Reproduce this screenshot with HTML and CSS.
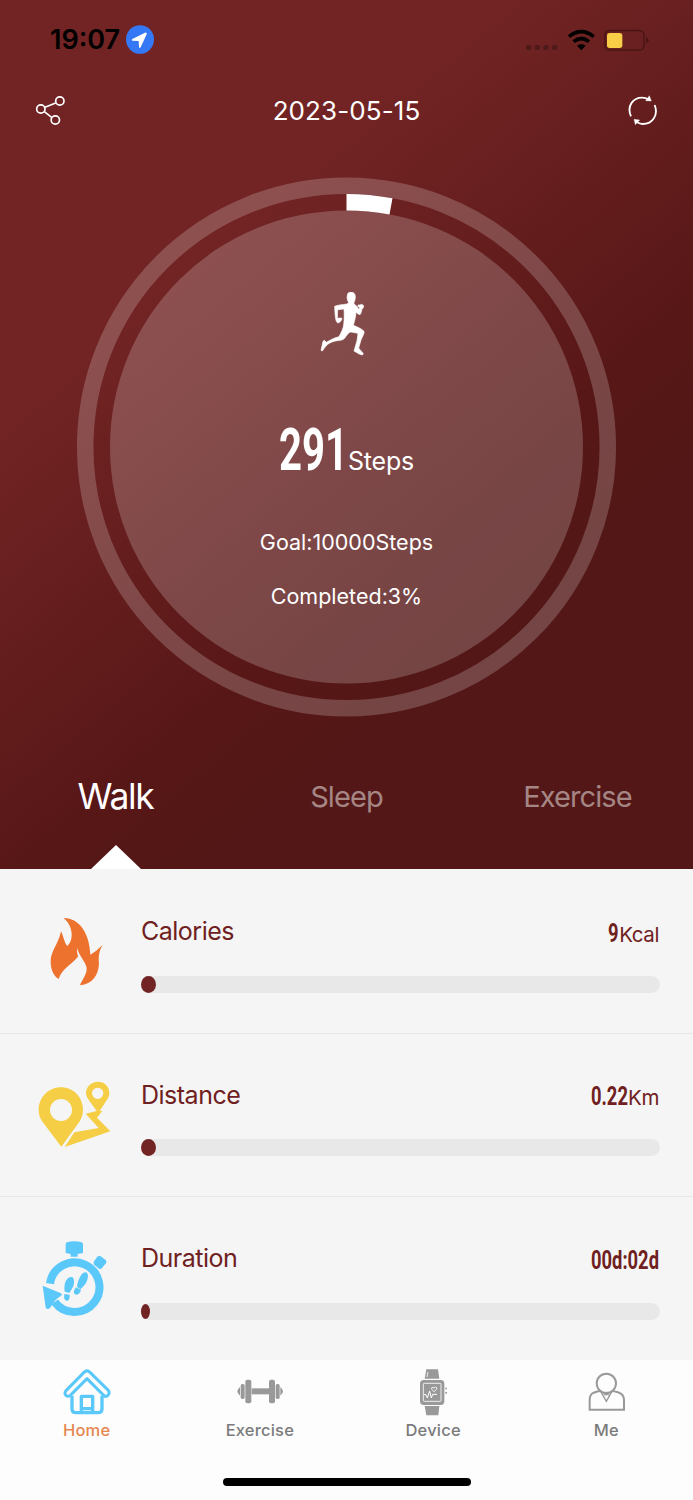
FILE: index.html
```html
<!DOCTYPE html>
<html lang="en">
<head>
  <meta charset="UTF-8" />
  <meta name="viewport" content="width=device-width, initial-scale=1.0"/>
  <title>Steps</title>
  <link rel="stylesheet" href="styles.css">
</head>
<body>

  <section class="hero">
    <div class="status-bar">
      <span class="time">19:07</span>
      <svg class="location" viewBox="377 75 84 87">
        <ellipse cx="419" cy="118.500" rx="42" ry="43" fill="#3478f6"/>
        <path d="M438 98 Q440 99 439 103 L421 142 Q418 146 416 141 L415 123 L396 122 Q392 120 396 117 L434 98 Q437 97 438 98Z" fill="#fff"/>
      </svg>
      <div class="status-icons">
        <svg class="signal" viewBox="534 84 102 66" fill="#501a1a">
          <rect x="537" y="132" width="16" height="15" rx="5"/>
          <rect x="563" y="132" width="16" height="15" rx="5"/>
          <rect x="589" y="132" width="16" height="15" rx="5"/>
          <rect x="615" y="132" width="16" height="15" rx="5"/>
        </svg>
        <svg class="wifi" viewBox="660 84 87 66" fill="none" stroke="#000">
          <path d="M666 107 Q703 77 740 107" stroke-width="11"/>
          <path d="M680 122 Q703 103 726 122" stroke-width="11"/>
          <path d="M690 134 Q703 124 716 134 L703 148Z" fill="#000" stroke="none"/>
        </svg>
        <svg class="battery" viewBox="774 84 138 66">
          <rect x="777" y="88.500" width="117" height="59" rx="14" fill="none" stroke="#471313" stroke-width="4"/>
          <rect x="783" y="96" width="46" height="45" rx="8" fill="#f7ce46"/>
          <path d="M900 109 Q908 111 908 118 Q908 125 900 127Z" fill="#471313"/>
        </svg>
      </div>
    </div>

    <header class="header">
      <svg class="header-icon" viewBox="105 285 93 93" fill="none" stroke="#fff" stroke-width="5">
        <circle cx="122.500" cy="327" r="12.500"/>
        <circle cx="179.500" cy="303" r="12.500"/>
        <circle cx="166" cy="360" r="12.500"/>
        <path d="M135 322 L167 309 M133 335 L155 352"/>
      </svg>
      <h1>2023-05-15</h1>
      <svg class="header-icon" viewBox="843 285 93 93" fill="none" stroke="#fff" stroke-width="5.500">
        <path d="M855 349 C841 317 862 292 890 293 Q898 293 907 298"/>
        <path d="M926 315 C938 345 920 372 890 372 Q882 372 872 366"/>
        <path d="M910 287 L916 303 L899 302Z M864 358 L881 360 L868 374Z" fill="#fff" stroke-width="1"/>
      </svg>
    </header>

    <div class="ring">
      <svg class="ring-bg" viewBox="0.5 0 540 540">
        <circle cx="270" cy="270" r="261.300" fill="none" stroke="#fff" stroke-opacity=".2" stroke-width="16.500"/>
        <circle cx="270" cy="270" r="236.500" fill="#fff" fill-opacity=".2"/>
        <path d="M270 25.300 A244.700 244.700 0 0 1 314.500 29.400" fill="none" stroke="#fff" stroke-width="16.500"/>
      </svg>
      <svg class="runner" viewBox="60 366 159 192" fill="#fff">
        <path d="M153 366 C160 366 166 371 166 380 C166 389 163 396 161 399 L165 405 C171 407 173 412 176 418 L180 414 L174 409 L174 405 L180 405 L185 403 L190 406 L191 411 L186 418 C184 426 183 431 180 434 C175 433 171 430 168 426 C168 438 164 451 160 466 C172 471 185 476 192 484 C194 490 187 500 183 510 L176 534 C180 540 187 546 190 551 L187 555 C179 554 171 548 162 543 L164 536 L171 512 L174 490 L153 486 C148 486 143 492 138 499 C132 510 124 511 112 512 C101 513 90 518 83 523 L73 534 L67 543 L63 541 L66 528 L69 514 L73 511 L79 517 C91 510 101 504 117 500 C124 487 130 475 131 465 C133 448 133 431 132 417 L113 419 L112 445 L119 444 L126 445 L124 451 L119 457 L113 459 L109 454 C105 442 105 429 104 409 C112 405 127 404 141 402 L146 398 C142 391 140 384 142 376 C143 369 147 366 153 366Z" stroke="#fff" stroke-width="2"/>
      </svg>
      <p class="steps"><span class="num">291</span><span class="unit">Steps</span></p>
      <p class="goal">Goal:10000Steps</p>
      <p class="completed">Completed:3%</p>
    </div>

    <nav class="tabs">
      <a class="active">Walk</a>
      <a>Sleep</a>
      <a>Exercise</a>
    </nav>
  </section>

  <main>
    <div class="row">
      <svg class="row-icon" viewBox="18 39 288 288" fill="#ec722e">
        <path d="M131 84 C180 84 209 133 211 194 Q229 184 248 165 C237 183 235 198 237 221 C235 256 218 281 180 286 C184 272 201 255 200 234 C197 216 179 200 171 174 C170 185 173 192 174 200 C160 219 124 236 116 267 C101 259 92 239 92 214 C92 183 116 161 123 124 C130 137 132 157 142 168 C152 159 155 148 155 132 C154 111 145 97 131 84Z"/>
      </svg>
      <div class="row-body">
        <div class="row-text">
          <span class="label">Calories</span>
          <span class="value"><span class="num n1">9</span><span class="unit">Kcal</span></span>
        </div>
        <div class="bar"><div class="fill"></div></div>
      </div>
    </div>

    <div class="row">
      <svg class="row-icon" viewBox="18 21 288 288" fill="#f5ce45">
        <path fill-rule="evenodd" d="M123 82 C160 82 189 112 189 149 C189 166 183 178 175 190 L124 260 L68 186 C60 175 56 164 56 149 C56 112 86 82 123 82Z M123 117 A33 33 0 1 0 123 183 A33 33 0 1 0 123 117Z"/>
        <path fill-rule="evenodd" d="M234 65 C253 65 268 79 268 99 C268 108 264 116 259 122 L239 153 L247 153 L231 173 L271 214 L134 261 L163 217 L236 204 L197 161 L230 153 L209 124 C203 116 198 108 198 99 C198 80 214 65 234 65Z M233 83 A17 17 0 1 0 233 117 A17 17 0 1 0 233 83Z"/>
      </svg>
      <div class="row-body">
        <div class="row-text">
          <span class="label">Distance</span>
          <span class="value"><span class="num n4">0.22</span><span class="unit">Km</span></span>
        </div>
        <div class="bar"><div class="fill"></div></div>
      </div>
    </div>

    <div class="row">
      <svg class="row-icon" viewBox="18 18 288 288" fill="#5bc8fa">
        <path d="M137 57 Q137 49 163 49 Q189 49 189 57 L189 84 L173 87 L173 95 L152 95 L152 87 L137 84Z"/>
        <path d="M233 94 L241 93 L258 106 L259 113 L244 131 L238 132 L221 118 L221 110Z"/>
        <path d="M90 176 A74.500 74.500 0 1 1 104 231" fill="none" stroke="#5bc8fa" stroke-width="24"/>
        <path d="M68 182 L123 205 Q128 210 122 213 L107 224 L90 249 Q82 255 77 248Z"/>
        <path d="M152 156 C160 154 163 162 162 175 C161 187 154 194 148 204 L134 200 C132 185 133 160 152 156Z M133 207 L149 209 Q150 227 140 227 Q130 226 133 207Z"/>
        <path d="M195 142 C204 142 206 152 202 164 C198 178 190 183 181 193 L171 185 C173 169 182 144 195 142Z M168 187 L183 195 Q179 208 170 209 Q158 208 163 194Z"/>
      </svg>
      <div class="row-body">
        <div class="row-text">
          <span class="label">Duration</span>
          <span class="value"><span class="num n6">00d:02d</span></span>
        </div>
        <div class="bar"><div class="fill small"></div></div>
      </div>
    </div>
  </main>

  <footer>
    <nav class="menu">
      <a class="active">
        <svg viewBox="68 39 144 144" fill="none" stroke="#5bc8fa" stroke-width="10" stroke-linejoin="round">
          <path d="M95 122 L95 162 Q95 173 106 173 L174 173 Q185 173 185 162 L185 122"/>
          <path d="M140 71 L90 121 Q81 128 75 119 Q72 114 77 107 L131 52 Q140 43 149 52 L204 106 Q209 114 203 121 Q196 127 190 121Z" stroke-width="9"/>
          <path d="M123 171 L123 124 L157 124 L157 171 M128 161 L152 161"/>
        </svg>
        Home
      </a>
      <a>
        <svg viewBox="588 39 144 144" fill="#999">
          <rect x="635" y="100" width="52" height="18"/>
          <rect x="616" y="74" width="18" height="71" rx="6"/>
          <rect x="687" y="74" width="18" height="71" rx="6"/>
          <rect x="602" y="87" width="12" height="45" rx="5"/>
          <rect x="707" y="87" width="12" height="45" rx="5"/>
          <path d="M600 96 Q592 103 592 109 Q592 116 600 122Z M721 96 Q729 103 729 109 Q729 116 721 122Z"/>
        </svg>
        Exercise
      </a>
      <a>
        <svg viewBox="87 39 144 144" fill="#999">
          <path d="M139 43 L174 43 L178 71 L134 71Z M134 153 L178 153 L175 181 L139 181Z"/>
          <rect x="120" y="75" width="73" height="75" rx="11"/>
          <path d="M196 98 H201 V103 H196Z M196 111 H201 V116 H196Z"/>
          <g fill="none" stroke="#fff" stroke-width="2.500">
            <rect x="130" y="85" width="53" height="54" rx="3"/>
            <path d="M132 119 L138 119 L142 129 L149 108 L154 129 L158 118 L171 118" stroke-width="3"/>
            <path d="M162 110 L155 103 Q153 97 159 97 L162 99 Q168 94 171 99 Q172 103 162 110Z"/>
            <path d="M144 51 L141 66"/>
          </g>
        </svg>
        Device
      </a>
      <a>
        <svg viewBox="607 39 144 144" fill="none" stroke="#999" stroke-width="6">
          <circle cx="680" cy="85" r="29"/>
          <path d="M661 108 C640 112 630 115 630 136 L630 164 L733 164 L733 136 C733 115 718 112 699 108"/>
          <path d="M663 109 L680 139 L697 109 M668 111 L680 119 L692 111 M674 121 L680 113 L687 121" stroke-width="4"/>
        </svg>
        Me
      </a>
    </nav>
    <div class="home-indicator"></div>
  </footer>

</body>
</html>
```
FILE: styles.css
```css
* { box-sizing: border-box; }

body {
  margin: 0; padding: 0;
  font-family: Inter, sans-serif;
  background: #f5f5f5; color: #6f2020;
}

svg { display: block; flex-shrink: 0; }
p, h1 { margin: 0; font-weight: 400; }

.hero {
  height: 869px;
  background: linear-gradient(140deg, #722424 29%, #581717 61%, #521716 72%);
  color: #fff;
}

/* status bar */
.status-bar {
  display: flex;
  align-items: center;
  height: 79px;
  padding: 0 43.5px 0 50px;
}

.time {
  width: 76px;
  color: #000;
  font-size: 27px;
  font-weight: 600;
  white-space: nowrap;
}

.location { width: 28px; height: 29px; }

.status-icons {
  display: flex;
  gap: 8px;
  margin-left: auto;
}

.signal { width: 34px; height: 22px; }
.wifi { width: 29px; height: 22px; }
.battery { width: 46px; height: 22px; }

.header {
  display: flex;
  align-items: center;
  justify-content: space-between;
  height: 63px;
  padding: 0 35px;
}

.header-icon { width: 31px; height: 31px; }

.header h1 { font-size: 26px; letter-spacing: .1px; }

.ring {
  position: relative;
  display: flex;
  flex-direction: column;
  align-items: center;
  width: 540px;
  height: 540px;
  margin: 35px auto 0;
  padding-top: 115px;
}

.ring-bg {
  position: absolute;
  top: 0; left: 0;
  width: 540px; height: 540px;
}

.runner { width: 53px; height: 64px; }

/* condensed digits */
.num {
  display: inline-block;
  font-family: Roboto, sans-serif;
  font-weight: 700;
  transform-origin: left;
  white-space: nowrap;
}

.steps {
  display: flex;
  align-items: baseline;
  height: 60px;
  margin: 64px 0 35px;
}

.steps .num {
  width: 69px;
  font-size: 59px;
  line-height: 60px;
  transform: scaleX(.68);
}

.steps .unit { font-size: 25px; letter-spacing: -.2px; }

.goal, .completed {
  font-size: 21.5px;
  line-height: 54px;
}

.tabs {
  display: flex;
  height: 152px;
  padding-top: 60px;
}

.tabs a {
  position: relative;
  flex: 1;
  height: 92px;
  font-size: 29px;
  line-height: 40px;
  letter-spacing: -.9px;
  text-align: center;
  color: #a58685;
}

.tabs .active { font-size: 35.5px; letter-spacing: -1.3px; color: #fff; }

.tabs .active::after {
  content: "";
  position: absolute;
  bottom: 0; left: 50%;
  margin-left: -25px;
  border: 25px solid transparent;
  border-top: 0;
  border-bottom: 24px solid #fff;
}

main { height: 491px; padding-top: 1px; }

.row {
  display: flex;
  align-items: center;
  gap: 19px;
  height: 163.7px;
  padding: 0 33.5px 0 26px;
  border-bottom: 1px solid #e8e8e8;
}

.row:last-child { border-bottom: 0; }

.row-icon { width: 96px; height: 96px; }

.row-body {
  flex: 1;
  align-self: flex-start;
  padding-top: 41px;
}

.row-text {
  display: flex;
  justify-content: space-between;
  height: 40px;
  line-height: 40px;
}

.label { font-size: 25px; letter-spacing: -.5px; }

.value {
  display: flex;
  align-items: baseline;
  padding: 1.5px .5px 0 0;
}

.value .num { font-size: 25.5px; transform: scaleX(.72); }
.value .unit { font-size: 20.5px; letter-spacing: -.4px; }
.n1 { width: 11px; }
.n4 { width: 37px; }
.n6 { width: 68px; }

.bar {
  display: flex;
  align-items: center;
  height: 17px;
  margin-top: 24.5px;
  border-radius: 9px;
  background: #e8e8e8;
}

.fill {
  width: 15px;
  height: 17px;
  border-radius: 50%;
  background: #722424;
}

.fill.small { width: 9px; height: 15px; }

footer { height: 140px; background: #fdfdfd; position: relative; }

.menu { display: flex; height: 118px; padding-top: 8px; }

.menu a {
  display: flex;
  flex: 1;
  flex-direction: column;
  align-items: center;
  font-size: 16.5px;
  font-weight: 500;
  line-height: 28px;
  letter-spacing: .2px;
  color: #7b7b7b;
}

.menu svg { width: 48px; height: 48px; }
.menu .active { color: #e5874f; }

.home-indicator {
  width: 248px;
  height: 8px;
  margin: 0 auto;
  border-radius: 4px;
  background: #000;
}
```
